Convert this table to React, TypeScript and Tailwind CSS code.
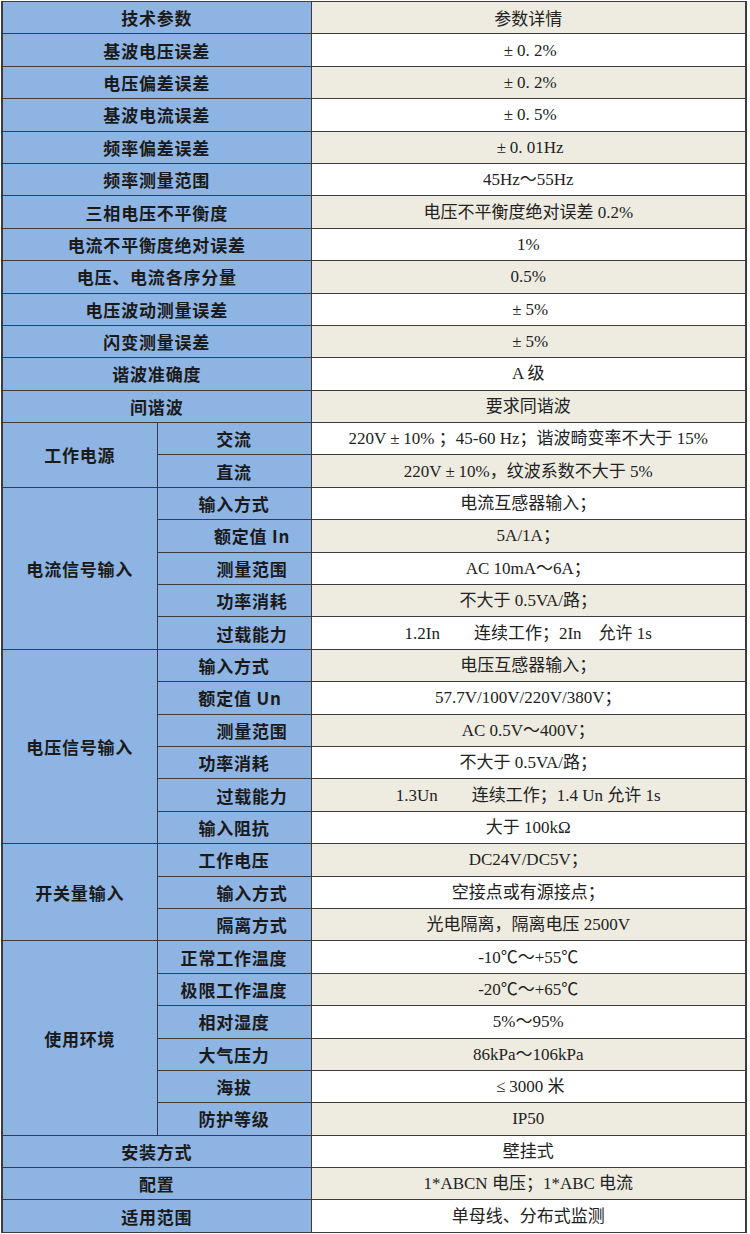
import React from 'react';

type Row = {
  group?: string;
  span?: number;
  label?: string;
  value: string;
  indent?: string;
};

const rows: Row[] = [
  { label: '基波电压误差', value: '±0. 2%' },
  { label: '电压偏差误差', value: '±0. 2%' },
  { label: '基波电流误差', value: '±0. 5%' },
  { label: '频率偏差误差', value: '±0. 01Hz' },
  { label: '频率测量范围', value: '45Hz～55Hz' },
  { label: '三相电压不平衡度', value: '电压不平衡度绝对误差 0.2%' },
  { label: '电流不平衡度绝对误差', value: '1%' },
  { label: '电压、电流各序分量', value: '0.5%' },
  { label: '电压波动测量误差', value: '±5%' },
  { label: '闪变测量误差', value: '±5%' },
  { label: '谐波准确度', value: 'A 级' },
  { label: '间谐波', value: '要求同谐波' },
  { group: '工作电源', span: 2, label: '交流', value: '220V±10% ；45-60 Hz；谐波畸变率不大于 15%' },
  { group: '', label: '直流', value: '220V±10%，纹波系数不大于 5%' },
  { group: '电流信号输入', span: 5, label: '输入方式', value: '电流互感器输入；' },
  { group: '', label: '额定值 In', value: '5A/1A；', indent: 'pl-[36px]' },
  { group: '', label: '测量范围', value: 'AC 10mA～6A；', indent: 'pl-[36px]' },
  { group: '', label: '功率消耗', value: '不大于 0.5VA/路；', indent: 'pl-[36px]' },
  { group: '', label: '过载能力', value: '1.2In　　连续工作；2In　允许 1s', indent: 'pl-[36px]' },
  { group: '电压信号输入', span: 6, label: '输入方式', value: '电压互感器输入；' },
  { group: '', label: '额定值 Un', value: '57.7V/100V/220V/380V；', indent: 'pl-[12px]' },
  { group: '', label: '测量范围', value: 'AC 0.5V～400V；', indent: 'pl-[36px]' },
  { group: '', label: '功率消耗', value: '不大于 0.5VA/路；' },
  { group: '', label: '过载能力', value: '1.3Un　　连续工作；1.4 Un 允许 1s', indent: 'pl-[36px]' },
  { group: '', label: '输入阻抗', value: '大于 100kΩ' },
  { group: '开关量输入', span: 3, label: '工作电压', value: 'DC24V/DC5V；' },
  { group: '', label: '输入方式', value: '空接点或有源接点；', indent: 'pl-[36px]' },
  { group: '', label: '隔离方式', value: '光电隔离，隔离电压 2500V', indent: 'pl-[36px]' },
  { group: '使用环境', span: 6, label: '正常工作温度', value: '-10℃～+55℃' },
  { group: '', label: '极限工作温度', value: '-20℃～+65℃' },
  { group: '', label: '相对湿度', value: '5%～95%' },
  { group: '', label: '大气压力', value: '86kPa～106kPa' },
  { group: '', label: '海拔', value: '≤3000 米' },
  { group: '', label: '防护等级', value: 'IP50' },
  { label: '安装方式', value: '壁挂式' },
  { label: '配置', value: '1*ABCN 电压；1*ABC 电流' },
  { label: '适用范围', value: '单母线、分布式监测' },
];

const labelCls =
  "border border-[#3c3c3c] bg-[#8eb4e3] text-center text-[17px] font-semibold text-[#1a1a1a] tracking-[0.8px] font-['Noto_Sans_CJK_SC',sans-serif] leading-none";
const valueCls =
  "border border-[#3c3c3c] text-center text-[17px] text-[#222] font-['Liberation_Serif','Noto_Sans_CJK_SC',serif] leading-none";

// the ± and ≤ in the source are full-width glyphs
function Value({ text }: { text: string }) {
  const parts = text.split(/([±≤])/);
  return (
    <>
      {parts.map((p, i) =>
        p === '±' || p === '≤' ? (
          <span key={i} className="inline-block w-[17px] text-center">{p}</span>
        ) : (
          <React.Fragment key={i}>{p}</React.Fragment>
        )
      )}
    </>
  );
}

export default function App() {
  return (
    <div className="w-[750px] bg-white pt-[1px] pl-[1px]">
      <table className="w-[746px] table-fixed border-collapse border-x-2 border-y border-[#3c3c3c]">
        <colgroup>
          <col className="w-[155px]" />
          <col className="w-[154px]" />
          <col />
        </colgroup>
        <tbody>
          <tr className="h-[32.4px]">
            <td colSpan={2} className={labelCls}>技术参数</td>
            <td className={`${valueCls} bg-[#eeece1] font-['Noto_Sans_CJK_SC',sans-serif]`}>参数详情</td>
          </tr>
          {rows.map((r, i) => {
            const bg = (i + 1) % 2 === 0 ? 'bg-[#eeece1]' : 'bg-white';
            return (
              <tr key={i} className="h-[32.4px]">
                {r.group === undefined ? (
                  <td colSpan={2} className={labelCls}>{r.label}</td>
                ) : (
                  <>
                    {r.group !== '' && (
                      <td rowSpan={r.span} className={labelCls}>{r.group}</td>
                    )}
                    <td className={`${labelCls} ${r.indent ?? ''}`}>{r.label}</td>
                  </>
                )}
                <td className={`${valueCls} ${bg} whitespace-pre`}>
                  <Value text={r.value} />
                </td>
              </tr>
            );
          })}
        </tbody>
      </table>
    </div>
  );
}
